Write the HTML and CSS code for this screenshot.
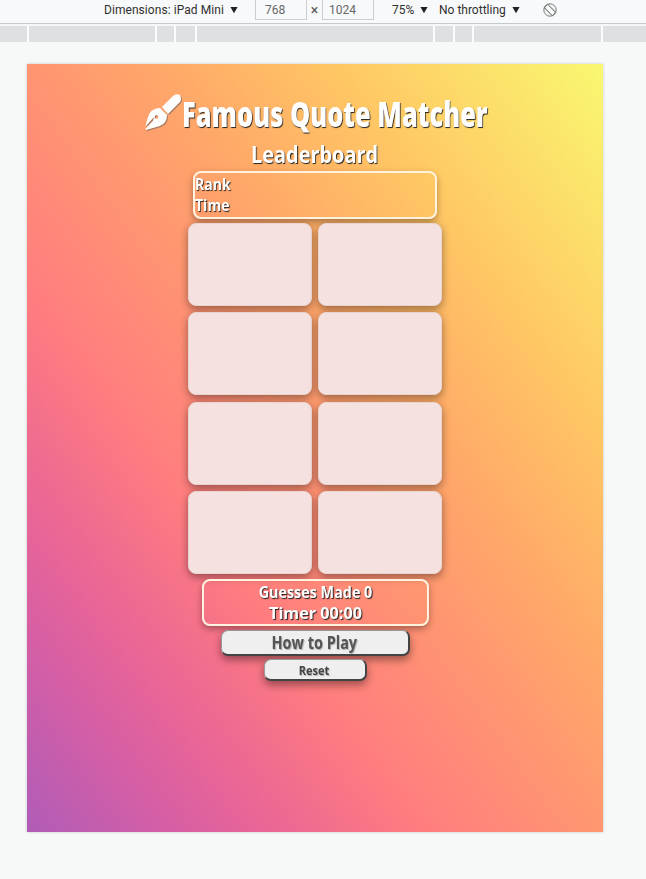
FILE: index.html
```html
<!DOCTYPE html>
<html lang="en">
<head>
<meta charset="utf-8">
<title>Famous Quote Matcher</title>
<link rel="stylesheet" href="styles.css">
</head>
<body>
<header class="toolbar">
  <span class="device">Dimensions: iPad Mini <svg class="caret" viewBox="0 0 8 8"><path d="M.4 1h7.2L4 7.2z"/></svg></span>
  <span class="field">768</span><span class="times">×</span><span class="field tall">1024</span>
  <span class="zoom">75% <svg class="caret" viewBox="0 0 8 8"><path d="M.4 1h7.2L4 7.2z"/></svg></span>
  <span class="throttle">No throttling <svg class="caret" viewBox="0 0 8 8"><path d="M.4 1h7.2L4 7.2z"/></svg></span>
  <svg class="rotate" viewBox="0 0 16 16"><g fill="none" stroke="#777" stroke-width="1"><circle cx="8" cy="8" r="6.2"/><rect x="5.6" y="2.2" width="4.8" height="11.6" rx=".8" transform="rotate(-45 8 8)"/></g></svg>
</header>
<div class="ruler"><i></i><i></i><i></i><i></i><i></i><i></i><i></i><i></i><b></b></div>
<main class="page">
  <h1><svg class="brush" viewBox="0 0 38 38"><path d="M18 14 29 3Q32 0 36 2Q38 6 36 9L24 21Z"/><path fill-rule="evenodd" d="M16 15 23 22Q23 30 16 33L2 37Q1 36 2 35L9 28L10 24L2 33Q1 32 2 31Q5 18 9 17Q12 15 16 15ZM11 23A1.6 1.6 0 1 0 14 25A1.6 1.6 0 0 0 11 23Z"/></svg><span class="title">Famous Quote Matcher</span></h1>
  <h2><span>Leaderboard</span></h2>
  <section class="board"><div>Rank</div><div>Time</div></section>
  <section class="cards"><div></div><div></div><div></div><div></div><div></div><div></div><div></div><div></div></section>
  <section class="stats"><div class="guesses">Guesses Made 0</div><div class="timer">Timer 00:00</div></section>
  <button class="how"><span>How to Play</span></button>
  <button class="reset"><span>Reset</span></button>
</main>
</body>
</html>
```
FILE: styles.css
```css
* { box-sizing: border-box; }
body { margin: 0; height: 879px; overflow: hidden; background: #f7f8f8; font-family: Roboto, sans-serif; }
.toolbar { display: flex; height: 24px; padding: 0 0 4px 104px; align-items: center; border-bottom: 1px solid #c5c9cc; background: #f8f9fa; color: #303030; font-size: 12px; white-space: nowrap; }
.caret { width: 8px; height: 8px; margin-left: 3px; fill: #222; }
.device { width: 151px; letter-spacing: .06px; }
.field { width: 52px; height: 20px; padding: 2px 10px 0 9px; line-height: 16px; border: 1px solid #cbcdcf; border-top: 0; color: #666; }
.tall { padding-left: 6px; }
.times { width: 15px; text-align: center; font-size: 14px; color: #555; }
.zoom { width: 47px; margin-left: 18px; }
.throttle { width: 103px; }
.rotate { width: 16px; height: 16px; }
.ruler { display: grid; grid-template-columns: 29px 128px 19px 21px 238px 20px 19px 129px 1fr; height: 18px; background: #dde1e3; border-top: 2px solid #f5f7f9; }
.ruler i { border-right: 2px solid #fbfcfc; }
.page { width: 576px; height: 768px; margin: 22px 0 0 27px; padding-top: 29px; display: flex; flex-direction: column; align-items: center; background: linear-gradient(54deg, #b05cb8, #d95fa3 14%, #ed6893 23%, #ff7d7f 35%, #ff9472 49%, #ffaa68 62%, #ffc864 77%, #f9f871); box-shadow: 0 0 3px #0003; color: #fff; font-family: "Open Sans", sans-serif; text-shadow: 1px 1px 1px #222; }
h1, h2 { margin: 0; }
h1 { width: 344px; height: 44px; display: flex; }
.brush { flex: none; width: 38px; height: 38px; margin-left: 1px; fill: #fff; filter: drop-shadow(1px 1px 0 #5558); overflow: visible; }
.title { font-size: 35px; line-height: 41px; font-weight: 800; white-space: nowrap; transform-origin: left; transform: scaleX(.726); }
h2 { height: 34px; font-size: 24px; line-height: 34px; font-weight: 700; }
h2 span { display: block; transform: scaleX(.83); }
.board, .stats { flex: none; border: 2px solid #fff2df; border-radius: 8px; font-size: 16.5px; line-height: 21px; font-weight: 700; box-shadow: 0 3px 7px #0005; }
.board { width: 244px; height: 48px; padding: 0; }
.board div { width: max-content; transform-origin: left; transform: scaleX(.85); }
.cards { flex: none; display: grid; grid-template-columns: 124px 124px; grid-auto-rows: 83px; gap: 6.3px 6px; margin-top: 4.2px; }
.cards div { background: #f5e1df; border: 1px solid #ead4cf; border-radius: 8px; box-shadow: 0 3px 8px #0006; }
.stats { width: 227px; height: 47px; margin-top: 4.9px; text-align: center; line-height: 21px; }
.guesses { transform: scaleX(.87); }
.timer { transform: scaleX(.98); }
button { flex: none; font-family: inherit; background: #efefef; border: 1px solid #444; border-width: 1px 2px 2px 1px; border-color: #999 #444 #444 #999; border-radius: 7px; padding: 0; color: #555; font-weight: 700; box-shadow: 0 4px 8px #0006; text-shadow: 1px 1px 1px #7778; }
button span { display: inline-block; transform: scaleX(.85); }
.how { width: 189px; height: 26px; margin-top: 4px; font-size: 17px; line-height: 23px; }
.reset { width: 103px; height: 22px; margin-top: 3.5px; font-size: 13px; line-height: 18px; color: #444; }
```
